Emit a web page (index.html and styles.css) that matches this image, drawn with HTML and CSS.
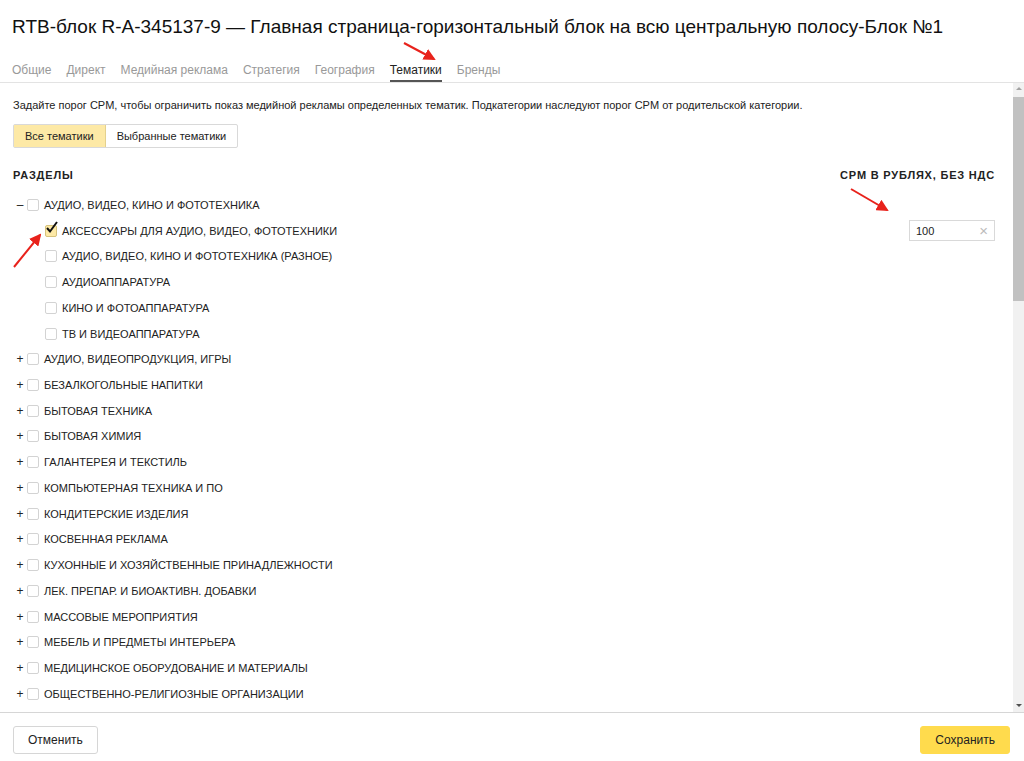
FILE: index.html
```html
<!DOCTYPE html>
<html lang="ru">
<head>
    <meta charset="UTF-8">
    <title>Тематики</title>
    <link rel="stylesheet" href="styles.css">
</head>
<body>

<div class="page">
    <div class="header">
        <h1>RTB-блок R-A-345137-9 — Главная страница-горизонтальный блок на всю центральную полосу-Блок №1</h1>
        <div class="tabs">
            <span class="tab">Общие</span>
            <span class="tab">Директ</span>
            <span class="tab">Медийная реклама</span>
            <span class="tab">Стратегия</span>
            <span class="tab">География</span>
            <span class="tab active">Тематики</span>
            <span class="tab">Бренды</span>
        </div>
    </div>

    <div class="main">
        <div class="content">
            <p class="hint">Задайте порог CPM, чтобы ограничить показ медийной рекламы определенных тематик. Подкатегории наследуют порог CPM от родительской категории.</p>
            <div class="switch">
                <span class="switch-item selected">Все тематики</span>
                <span class="switch-item">Выбранные тематики</span>
            </div>
            <div class="list-head">
                <span>Разделы</span>
                <span>CPM в рублях, без НДС</span>
            </div>
            <div class="tree">
                <div class="row"><span class="toggle">–</span><span class="box"></span><span class="label">Аудио, видео, кино и фототехника</span></div>
                <div class="row child">
                    <span class="box checked"><svg width="14" height="14" viewBox="0 0 14 14"><path d="M2 7 L5 10.5 L12 1" fill="none" stroke="#111" stroke-width="2"/></svg></span>
                    <span class="label">Аксессуары для аудио, видео, фототехники</span>
                    <span class="cpm"><span>100</span><span class="clear">×</span></span>
                </div>
                <div class="row child"><span class="box"></span><span class="label">Аудио, видео, кино и фототехника (разное)</span></div>
                <div class="row child"><span class="box"></span><span class="label">Аудиоаппаратура</span></div>
                <div class="row child"><span class="box"></span><span class="label">Кино и фотоаппаратура</span></div>
                <div class="row child"><span class="box"></span><span class="label">ТВ и видеоаппаратура</span></div>
                <div class="row"><span class="toggle">+</span><span class="box"></span><span class="label">Аудио, видеопродукция, игры</span></div>
                <div class="row"><span class="toggle">+</span><span class="box"></span><span class="label">Безалкогольные напитки</span></div>
                <div class="row"><span class="toggle">+</span><span class="box"></span><span class="label">Бытовая техника</span></div>
                <div class="row"><span class="toggle">+</span><span class="box"></span><span class="label">Бытовая химия</span></div>
                <div class="row"><span class="toggle">+</span><span class="box"></span><span class="label">Галантерея и текстиль</span></div>
                <div class="row"><span class="toggle">+</span><span class="box"></span><span class="label">Компьютерная техника и ПО</span></div>
                <div class="row"><span class="toggle">+</span><span class="box"></span><span class="label">Кондитерские изделия</span></div>
                <div class="row"><span class="toggle">+</span><span class="box"></span><span class="label">Косвенная реклама</span></div>
                <div class="row"><span class="toggle">+</span><span class="box"></span><span class="label">Кухонные и хозяйственные принадлежности</span></div>
                <div class="row"><span class="toggle">+</span><span class="box"></span><span class="label">Лек. препар. и биоактивн. добавки</span></div>
                <div class="row"><span class="toggle">+</span><span class="box"></span><span class="label">Массовые мероприятия</span></div>
                <div class="row"><span class="toggle">+</span><span class="box"></span><span class="label">Мебель и предметы интерьера</span></div>
                <div class="row"><span class="toggle">+</span><span class="box"></span><span class="label">Медицинское оборудование и материалы</span></div>
                <div class="row"><span class="toggle">+</span><span class="box"></span><span class="label">Общественно-религиозные организации</span></div>
            </div>
        </div>
        <div class="scrollbar">
            <div class="scroll-up"></div>
            <div class="scroll-thumb"></div>
            <div class="scroll-space"></div>
            <div class="scroll-down"></div>
        </div>
    </div>

    <div class="footer">
        <button class="btn">Отменить</button>
        <button class="btn btn-yellow">Сохранить</button>
    </div>
</div>

<!-- red annotation arrows from the screenshot -->
<svg class="marks" width="1024" height="761" viewBox="0 0 1024 761">
    <defs>
        <marker id="head" markerWidth="6" markerHeight="6" refX="5" refY="3" orient="auto" markerUnits="strokeWidth">
            <path d="M0 0 L6 3 L0 6 Z" fill="#e8221b"/>
        </marker>
    </defs>
    <line x1="404" y1="43" x2="434" y2="59" stroke="#e8221b" stroke-width="2" marker-end="url(#head)"/>
    <line x1="851" y1="189" x2="887" y2="210" stroke="#e8221b" stroke-width="2" marker-end="url(#head)"/>
    <line x1="14" y1="267" x2="40" y2="235" stroke="#e8221b" stroke-width="2" marker-end="url(#head)"/>
</svg>

</body>
</html>
```

FILE: styles.css
```css
body {
    font-family: "Liberation Sans", Arial, sans-serif;
    background-color: #fff;
    color: #222;
    margin: 0;
    padding: 0;
}
.page {
    height: 761px;
    display: flex;
    flex-direction: column;
    overflow: hidden;
}
.header {
    padding: 0 0 0 12px;
    border-bottom: 1px solid #e3e3e3;
}
h1 {
    margin: 0;
    padding-top: 15px;
    font-size: 19px;
    font-weight: normal;
    line-height: 24px;
    color: #111;
    white-space: nowrap;
}
.tabs {
    display: flex;
    gap: 15px;
    margin-top: 16px;
}
.tab {
    font-size: 12px;
    line-height: 16px;
    color: #999;
    padding-top: 7px;
    padding-bottom: 2px;
    border-bottom: 2px solid transparent;
}
.tab.active {
    color: #222;
    border-bottom-color: #555;
}
.main {
    flex: 1;
    display: flex;
    min-height: 0;
}
.content {
    flex: 1;
    padding: 15px 18px 0 13px;
    overflow: hidden;
}
.hint {
    margin: 0;
    font-size: 11px;
    line-height: 14px;
}
.switch {
    display: inline-flex;
    margin-top: 12px;
    border: 1px solid #d9d9d9;
    border-radius: 2px;
}
.switch-item {
    font-size: 11px;
    line-height: 22px;
    padding: 0 11px;
}
.switch-item.selected {
    background-color: #fde9a6;
    border-right: 1px solid #e4d18e;
}
.list-head {
    display: flex;
    justify-content: space-between;
    margin-top: 20px;
    font-size: 11px;
    line-height: 14px;
    font-weight: bold;
    letter-spacing: 0.8px;
    text-transform: uppercase;
    color: #222;
}
.tree {
    margin-top: 10px;
}
.row {
    display: flex;
    align-items: center;
    height: 25.74px;
    font-size: 11px;
    text-transform: uppercase;
}
.row.child {
    padding-left: 32px;
}
.toggle {
    width: 14px;
    text-align: center;
    font-size: 12px;
}
.box {
    position: relative;
    width: 12px;
    height: 12px;
    box-sizing: border-box;
    border: 1px solid #d3d3d3;
    border-radius: 2px;
    margin-right: 5px;
    flex-shrink: 0;
}
.box.checked {
    background-color: #fde9a6;
    border-color: #d6c27c;
}
.box svg {
    position: absolute;
    left: -1px;
    top: -5px;
}
.label {
    flex: 1;
    white-space: nowrap;
}
.cpm {
    display: flex;
    justify-content: space-between;
    align-items: center;
    width: 86px;
    height: 21px;
    box-sizing: border-box;
    border: 1px solid #d9d9d9;
    padding: 0 6px 0 6px;
    font-size: 11px;
    text-transform: none;
}
.clear {
    color: #bbb;
    font-size: 15px;
}
.scrollbar {
    width: 11px;
    display: flex;
    flex-direction: column;
    background-color: #f1f1f1;
}
.scroll-up, .scroll-down {
    height: 14px;
    position: relative;
}
.scroll-up::after, .scroll-down::after {
    content: "";
    position: absolute;
    left: 3px;
    border-left: 3px solid transparent;
    border-right: 3px solid transparent;
}
.scroll-up::after {
    top: 4px;
    border-bottom: 3px solid #a3a3a3;
}
.scroll-down::after {
    top: 6px;
    border-top: 3px solid #505050;
}
.scroll-thumb {
    height: 204px;
    background-color: #c1c1c1;
}
.scroll-space {
    flex: 1;
}
.footer {
    display: flex;
    justify-content: space-between;
    align-items: flex-start;
    height: 35px;
    padding: 13px 14px 0 13px;
    border-top: 1px solid #d6d6d6;
}
.btn {
    font-family: "Liberation Sans", Arial, sans-serif;
    font-size: 12px;
    height: 28px;
    padding: 0 14px;
    background-color: #fff;
    border: 1px solid #d6d6d6;
    border-radius: 3px;
    color: #222;
}
.btn-yellow {
    background-color: #ffdb4d;
    border-color: #ffdb4d;
}
.marks {
    position: absolute;
    left: 0;
    top: 0;
    pointer-events: none;
}
```
